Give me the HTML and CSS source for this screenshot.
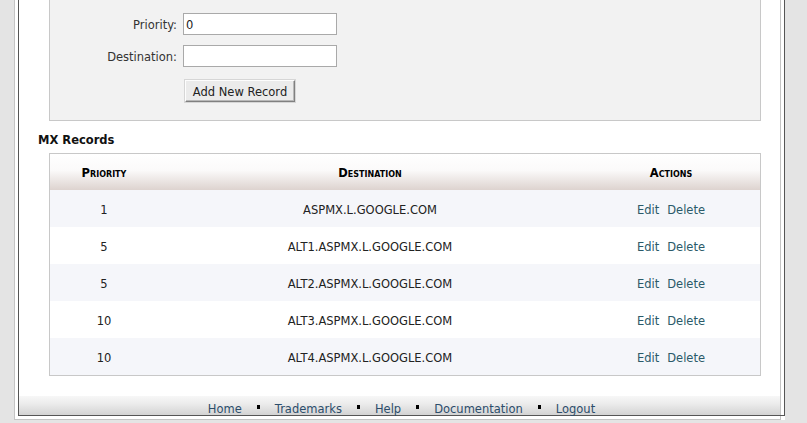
FILE: index.html
```html
<!DOCTYPE html>
<html>
<head>
<meta charset="utf-8">
<title>MX Records</title>
<link rel="stylesheet" href="styles.css">
</head>
<body>
<div class="frame">
  <div class="page">
    <div class="panel">
      <div class="form">
        <label class="lbl">Priority:</label>
        <input class="inp" type="text" value="0">
        <label class="lbl">Destination:</label>
        <input class="inp" type="text" value="">
        <span class="spacer"></span>
        <button class="btn" type="button">Add New Record</button>
      </div>
    </div>
    <h2 class="heading">MX Records</h2>
    <div class="tablebox">
      <table class="records">
        <colgroup><col class="c1"><col class="c2"><col class="c3"></colgroup>
        <thead>
          <tr><th>Priority</th><th>Destination</th><th>Actions</th></tr>
        </thead>
        <tbody>
          <tr class="alt"><td>1</td><td>ASPMX.L.GOOGLE.COM</td><td><a class="act">Edit</a><a class="act">Delete</a></td></tr>
          <tr><td>5</td><td>ALT1.ASPMX.L.GOOGLE.COM</td><td><a class="act">Edit</a><a class="act">Delete</a></td></tr>
          <tr class="alt"><td>5</td><td>ALT2.ASPMX.L.GOOGLE.COM</td><td><a class="act">Edit</a><a class="act">Delete</a></td></tr>
          <tr><td>10</td><td>ALT3.ASPMX.L.GOOGLE.COM</td><td><a class="act">Edit</a><a class="act">Delete</a></td></tr>
          <tr class="alt"><td>10</td><td>ALT4.ASPMX.L.GOOGLE.COM</td><td><a class="act">Edit</a><a class="act">Delete</a></td></tr>
        </tbody>
      </table>
    </div>
    <div class="footer">
      <a class="flink">Home</a><span class="bullet"></span>
      <a class="flink">Trademarks</a><span class="bullet"></span>
      <a class="flink">Help</a><span class="bullet"></span>
      <a class="flink">Documentation</a><span class="bullet"></span>
      <a class="flink">Logout</a>
    </div>
  </div>
</div>
</body>
</html>
```
FILE: styles.css
```css
html, body {
  margin: 0;
  padding: 0;
}
body {
  background: #e4e4e4;
  font-family: "DejaVu Sans", Verdana, sans-serif;
  font-size: 11.5px;
  color: #222;
  overflow: hidden;
}
.frame {
  margin-left: 14px;
  width: 767px;
  box-sizing: border-box;
  background: #fff;
  border-left: 1px solid #c4c4c4;
  border-right: 1px solid #c4c4c4;
  border-bottom: 1px solid #c4c4c4;
  padding: 0 0 3px 3px;
  box-shadow: 4px 0 0 #fff;
}
.page {
  width: 767px;
  height: 416px;
  box-sizing: border-box;
  border-left: 1px solid #555;
  border-right: 1px solid #555;
  border-bottom: 1px solid #555;
  display: flex;
  flex-direction: column;
}
.page > * {
  flex-shrink: 0;
}
.panel {
  margin-left: 30px;
  width: 712px;
  height: 121px;
  box-sizing: border-box;
  background: #f2f2f2;
  border: 1px solid #c8c8c8;
  border-top: none;
  padding-top: 13px;
}
.form {
  display: grid;
  grid-template-columns: 127px 154px;
  column-gap: 6px;
  grid-template-rows: 22px 22px 22px;
  row-gap: 10px;
}
.form .btn {
  margin-top: 3px;
}
.lbl {
  justify-self: end;
  align-self: center;
  color: #333;
  padding-top: 1px;
}
.inp {
  width: 154px;
  height: 22px;
  box-sizing: border-box;
  border: 1px solid #a9a9a9;
  background: #fff;
  padding: 1px 2px 0;
  font-family: "DejaVu Sans", Verdana, sans-serif;
  font-size: 11.5px;
  color: #222;
  outline: none;
}
.btn {
  justify-self: start;
  margin-left: 2px;
  width: 110px;
  height: 22px;
  box-sizing: border-box;
  background: #ebebeb;
  border: 1px solid;
  border-color: #fdfdfd #808080 #808080 #fdfdfd;
  box-shadow: inset -1px -1px 0 #b8b8b8, 0 0 0 1px #d6d6d6;
  font-family: "DejaVu Sans", Verdana, sans-serif;
  font-size: 11.5px;
  color: #222;
  padding: 1px 0 0;
}
.heading {
  margin: 13px 0 6px 19px;
  font-size: 11.5px;
  line-height: 13px;
  font-weight: bold;
  color: #111;
}
.tablebox {
  margin-left: 30px;
  width: 712px;
  box-sizing: border-box;
  border: 1px solid #c8c8c8;
}
.records {
  width: 710px;
  border-collapse: collapse;
  table-layout: fixed;
}
.c1 { width: 108px; }
.c2 { width: 424px; }
.c3 { width: 178px; }
.records th {
  height: 35px;
  padding: 1px 0 0;
  font-weight: bold;
  font-variant: small-caps;
  font-size: 11.5px;
  color: #000;
  background: linear-gradient(to bottom, #ffffff 0%, #fbfafa 45%, #ddd3cf 100%);
  text-align: center;
}
.records td {
  height: 35px;
  padding: 2px 0 0;
  text-align: center;
  color: #222;
}
.records tr.alt td {
  background: #f5f6fa;
}
.act {
  color: #2b5a69;
  margin: 0 4px;
}
.footer {
  margin-top: 20px;
  margin-right: 4px;
  height: 19px;
  box-sizing: border-box;
  padding-top: 7px;
  padding-left: 4px;
  background: linear-gradient(to bottom, #f7f7f7 0%, #ececec 40%, #d3d3d3 100%);
  display: flex;
  justify-content: center;
  align-items: center;
  line-height: 15px;
}
.flink {
  color: #2c4d6b;
}
.bullet {
  display: inline-block;
  width: 3px;
  height: 4px;
  background: #000;
  margin: -5px 15px 0 15px;
}
```
